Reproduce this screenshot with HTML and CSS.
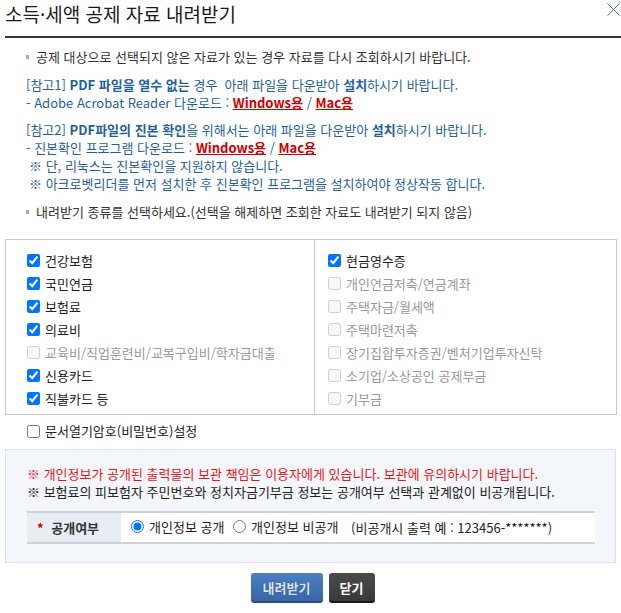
FILE: index.html
```html
<!DOCTYPE html>
<html lang="ko">
<head>
    <meta charset="UTF-8">
    <meta name="viewport" content="width=device-width, initial-scale=1.0">
    <title>소득·세액 공제 자료 내려받기</title>
    <link rel="stylesheet" href="styles.css">
</head>
<body>
    <header class="popup-head">
        <h1>소득·세액 공제 자료 내려받기</h1>
        <button type="button" class="btn-close" aria-label="닫기">
            <svg width="13" height="13" viewBox="0 0 13 13"><path d="M0.5 0.5 L12.5 12.5 M12.5 0.5 L0.5 12.5" stroke="#6b7488" stroke-width="1" fill="none"/></svg>
        </button>
    </header>

    <div class="popup-body">
        <div class="guide">
            <p class="dot-line"><span class="sq"></span>공제 대상으로 선택되지 않은 자료가 있는 경우 자료를 다시 조회하시기 바랍니다.</p>

            <div class="note">
                <p>[참고1] <b>PDF 파일을 열수 없는</b> 경우 &nbsp;아래 파일을 다운받아 <b>설치</b>하시기 바랍니다.</p>
                <p>- Adobe Acrobat Reader 다운로드 : <a href="#">Windows용</a> / <a href="#">Mac용</a></p>
            </div>

            <div class="note">
                <p>[참고2] <b>PDF파일의 진본 확인</b>을 위해서는 아래 파일을 다운받아 <b>설치</b>하시기 바랍니다.</p>
                <p>- 진본확인 프로그램 다운로드 : <a href="#">Windows용</a> / <a href="#">Mac용</a></p>
                <p><span class="mark">※</span> 단, 리눅스는 진본확인을 지원하지 않습니다.</p>
                <p><span class="mark">※</span> 아크로벳리더를 먼저 설치한 후 진본확인 프로그램을 설치하여야 정상작동 합니다.</p>
            </div>

            <p class="dot-line"><span class="sq"></span>내려받기 종류를 선택하세요.(선택을 해제하면 조회한 자료도 내려받기 되지 않음)</p>
        </div>

        <div class="kind-box">
            <ul class="kind-col">
                <li><label><input type="checkbox" checked>건강보험</label></li>
                <li><label><input type="checkbox" checked>국민연금</label></li>
                <li><label><input type="checkbox" checked>보험료</label></li>
                <li><label><input type="checkbox" checked>의료비</label></li>
                <li class="off"><label><input type="checkbox" disabled>교육비/직업훈련비/교복구입비/학자금대출</label></li>
                <li><label><input type="checkbox" checked>신용카드</label></li>
                <li><label><input type="checkbox" checked>직불카드 등</label></li>
            </ul>
            <ul class="kind-col">
                <li><label><input type="checkbox" checked>현금영수증</label></li>
                <li class="off"><label><input type="checkbox" disabled>개인연금저축/연금계좌</label></li>
                <li class="off"><label><input type="checkbox" disabled>주택자금/월세액</label></li>
                <li class="off"><label><input type="checkbox" disabled>주택마련저축</label></li>
                <li class="off"><label><input type="checkbox" disabled>장기집합투자증권/벤처기업투자신탁</label></li>
                <li class="off"><label><input type="checkbox" disabled>소기업/소상공인 공제부금</label></li>
                <li class="off"><label><input type="checkbox" disabled>기부금</label></li>
            </ul>
        </div>

        <label class="pw-opt"><input type="checkbox">문서열기암호(비밀번호)설정</label>

        <div class="privacy">
            <p class="warn">※ 개인정보가 공개된 출력물의 보관 책임은 이용자에게 있습니다. 보관에 유의하시기 바랍니다.</p>
            <p>※ 보험료의 피보험자 주민번호와 정치자금기부금 정보는 공개여부 선택과 관계없이 비공개됩니다.</p>

            <table class="privacy-table">
                <tr>
                    <th><span class="req">*</span> 공개여부</th>
                    <td>
                        <label><input type="radio" name="open" checked>개인정보 공개</label>
                        <label><input type="radio" name="open">개인정보 비공개</label>
                        <span class="sample">(비공개시 출력 예 : 123456-*******)</span>
                    </td>
                </tr>
            </table>
        </div>

        <div class="btn-area">
            <button type="button" class="btn btn-blue">내려받기</button>
            <button type="button" class="btn btn-dark">닫기</button>
        </div>
    </div>
</body>
</html>
```

FILE: styles.css
```css
:root {
    --text-color: #222;
    --blue-text: #1f5f9f;
    --link-red: #d00000;
    --warn-red: #e8161b;
    --line-dark: #333;
    --box-border: #c8c8c8;
    --panel-bg: #f4f6fa;
    --panel-border: #dde2ea;
}

* {
    margin: 0;
    padding: 0;
    box-sizing: border-box;
}

body {
    font-family: "Noto Sans CJK KR", "Noto Sans", sans-serif;
    font-size: 13px;
    line-height: 18px;
    color: var(--text-color);
    background: #fff;
}

ul {
    list-style: none;
}

/* header */
.popup-head {
    display: flex;
    justify-content: space-between;
    align-items: flex-start;
    margin-left: 5px;
    height: 38px;
    border-bottom: 2px solid var(--line-dark);
}

.popup-head h1 {
    font-size: 19px;
    font-weight: normal;
    line-height: 22px;
    padding-top: 3px;
    color: #1a1a1a;
}

.btn-close {
    border: none;
    background: none;
    width: 13px;
    height: 13px;
    margin: 3px 1px 0 0;
    cursor: pointer;
}

.btn-close svg {
    display: block;
}

.popup-body {
    padding: 0 4px 0 5px;
}

/* guide text */
.guide {
    padding: 10px 0 0 21px;
}

.dot-line {
    color: #333;
}

.sq {
    display: inline-block;
    width: 3px;
    height: 4px;
    background: #aaa;
    vertical-align: middle;
    margin: 0 7px 2px 0;
}

.note {
    margin-top: 10px;
    color: var(--blue-text);
}

.note + .note {
    margin-top: 9px;
}

.note b {
    font-weight: bold;
}

.note a {
    color: var(--link-red);
    font-weight: bold;
    text-decoration: underline;
}

.mark {
    display: inline-block;
    margin-left: 3px;
    font-weight: bold;
}

.guide > .dot-line:last-child {
    margin-top: 10px;
}

/* kind select box */
.kind-box {
    display: grid;
    grid-template-columns: 308px 1fr;
    margin-top: 18px;
    border: 1px solid var(--box-border);
    padding: 9px 0 4px;
}

.kind-col {
    padding-left: 21px;
}

.kind-col + .kind-col {
    border-left: 1px solid var(--box-border);
    margin-top: -9px;
    margin-bottom: -4px;
    padding: 9px 0 4px 13px;
}

.kind-col li {
    height: 23px;
    display: flex;
    align-items: center;
}

.kind-col label,
.pw-opt {
    display: flex;
    align-items: center;
}

.kind-col input,
.pw-opt input {
    margin: 0 5px 0 0;
    width: 13px;
    height: 13px;
}

.kind-col .off {
    color: #999;
}

.pw-opt {
    height: 24px;
    margin: 4px 0 0 22px;
    width: max-content;
}

/* privacy panel */
.privacy {
    margin-top: 6px;
    background: var(--panel-bg);
    border: 1px solid var(--panel-border);
    padding: 15px 20px 18px 21px;
    margin-right: 1px;
}

.privacy .warn {
    color: var(--warn-red);
}

.privacy-table {
    width: 100%;
    margin-top: 10px;
    border-collapse: collapse;
    border-top: 2px solid #cdd1d8;
    border-bottom: 2px solid #cdd1d8;
}

.privacy-table th {
    width: 94px;
    height: 31px;
    background: #e8ecf3;
    font-size: 13px;
    font-weight: bold;
    color: #333;
    text-align: left;
    padding-left: 10px;
}

.privacy-table .req {
    color: #c00;
    margin-right: 4px;
}

.privacy-table td {
    background: #fff;
    padding-left: 10px;
    white-space: nowrap;
}

.privacy-table label {
    display: inline-flex;
    align-items: center;
    margin-right: 5px;
}

.privacy-table input {
    margin: 0 5px 0 0;
    width: 13px;
    height: 13px;
}

.sample {
    margin-left: 4px;
}

/* buttons */
.btn-area {
    display: flex;
    justify-content: center;
    gap: 6px;
    margin-top: 10px;
    padding-left: 3px;
}

.btn {
    height: 30px;
    border: none;
    border-radius: 3px;
    font-family: inherit;
    font-size: 13px;
    font-weight: bold;
    cursor: pointer;
}

.btn-blue {
    width: 72px;
    background: linear-gradient(#4a80c2, #3966a6);
    border-bottom: 2px solid #2c4f82;
    color: #dfe6ee;
    text-shadow: 0 0 1px #1d3a66;
}

.btn-dark {
    width: 46px;
    background: linear-gradient(#4a4a4a, #3a3a3a);
    border-bottom: 2px solid #1a1a1a;
    color: #fff;
}
```
